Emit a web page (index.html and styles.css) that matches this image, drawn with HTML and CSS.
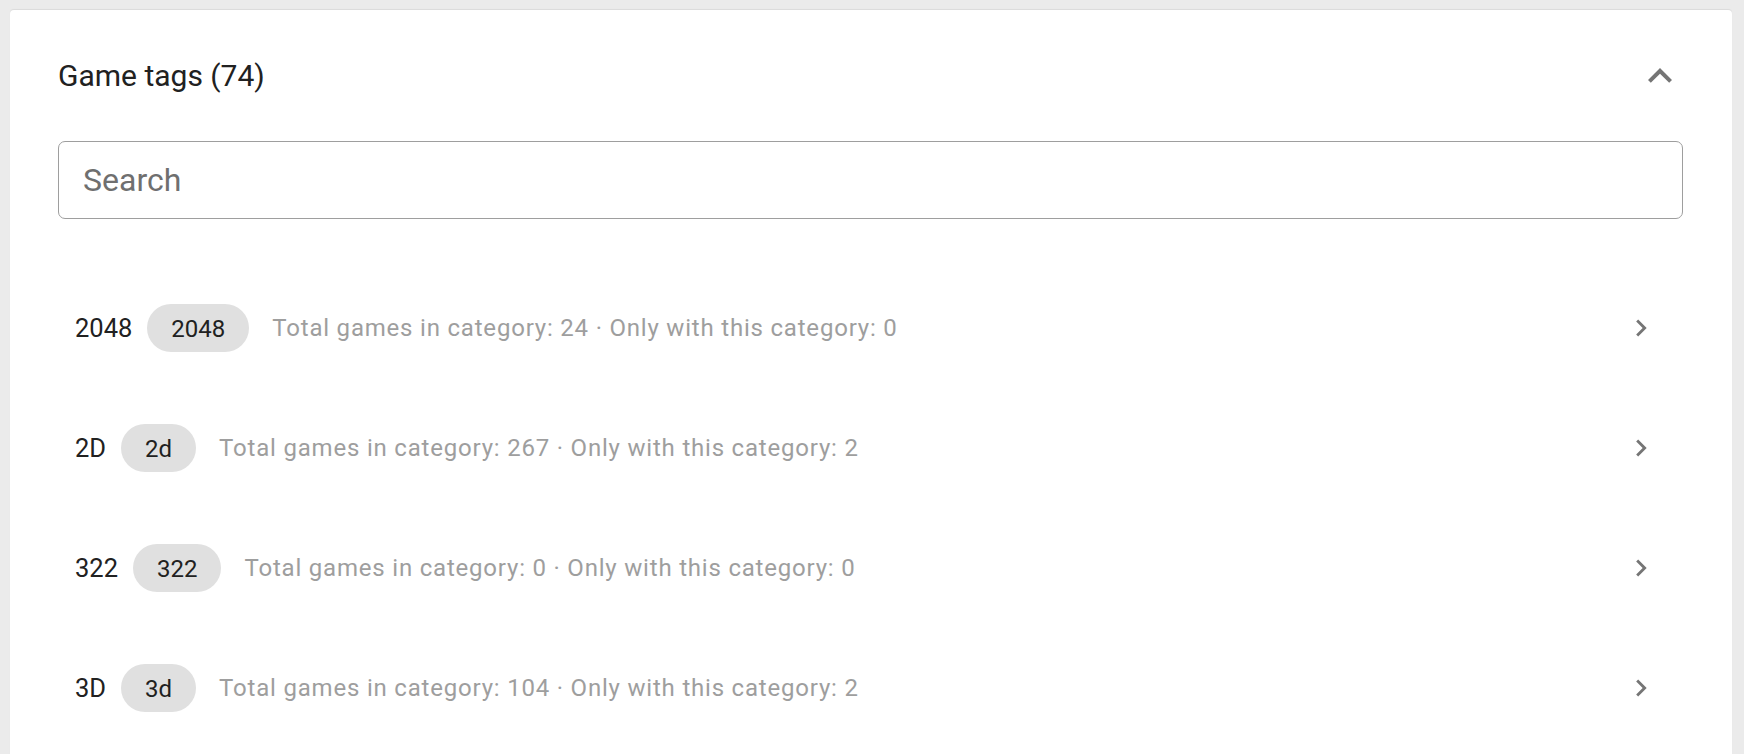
FILE: index.html
```html
<!DOCTYPE html>
<html lang="en">
<head>
<meta charset="utf-8">
<title>Game tags</title>
<link rel="stylesheet" href="styles.css">
</head>
<body>
<div class="page">
  <section class="card">
    <header class="card-header">
      <h2 class="title">Game tags (74)</h2>
      <button class="icon-btn" aria-label="Collapse">
        <svg viewBox="0 0 24 24" class="icon-lg"><path d="M12 8l-6 6 1.41 1.41L12 10.83l4.59 4.58L18 14z"/></svg>
      </button>
    </header>
    <div class="search">
      <input class="search-input" type="text" placeholder="Search">
    </div>
    <ul class="tag-list">
      <li class="tag-row">
        <span class="tag-name">2048</span>
        <span class="chip">2048</span>
        <span class="tag-meta">Total games in category: 24 · Only with this category: 0</span>
        <svg viewBox="0 0 24 24" class="icon-sm"><path d="M10 6 8.59 7.41 13.17 12l-4.58 4.59L10 18l6-6z"/></svg>
      </li>
      <li class="tag-row">
        <span class="tag-name">2D</span>
        <span class="chip">2d</span>
        <span class="tag-meta">Total games in category: 267 · Only with this category: 2</span>
        <svg viewBox="0 0 24 24" class="icon-sm"><path d="M10 6 8.59 7.41 13.17 12l-4.58 4.59L10 18l6-6z"/></svg>
      </li>
      <li class="tag-row">
        <span class="tag-name">322</span>
        <span class="chip">322</span>
        <span class="tag-meta">Total games in category: 0 · Only with this category: 0</span>
        <svg viewBox="0 0 24 24" class="icon-sm"><path d="M10 6 8.59 7.41 13.17 12l-4.58 4.59L10 18l6-6z"/></svg>
      </li>
      <li class="tag-row">
        <span class="tag-name">3D</span>
        <span class="chip">3d</span>
        <span class="tag-meta">Total games in category: 104 · Only with this category: 2</span>
        <svg viewBox="0 0 24 24" class="icon-sm"><path d="M10 6 8.59 7.41 13.17 12l-4.58 4.59L10 18l6-6z"/></svg>
      </li>
    </ul>
  </section>
</div>
</body>
</html>
```
FILE: styles.css
```css
* { box-sizing: border-box; }
html, body {
  margin: 0;
  padding: 0;
  height: 100%;
  overflow: hidden;
  background: #ebebeb;
  font-family: Roboto, "Noto Sans", "Liberation Sans", sans-serif;
}
.page {
  padding: 10px 12px 0 10px;
}
.card {
  background: #fff;
  border-radius: 4px;
  box-shadow: 0 -1px 1px rgba(0, 0, 0, 0.07);
  padding: 42px 49px 0 48px;
  min-height: 760px;
}
.card-header {
  display: flex;
  align-items: center;
  justify-content: space-between;
  height: 48px;
}
.title {
  margin: 0;
  font-size: 30px;
  font-weight: 400;
  color: #212121;
  line-height: 1;
}
.icon-btn {
  width: 48px;
  height: 48px;
  padding: 0;
  border: 0;
  background: transparent;
  display: flex;
  align-items: center;
  justify-content: center;
  margin-right: -1px;
}
.icon-lg {
  width: 48px;
  height: 48px;
  fill: #757575;
  display: block;
}
.search {
  margin-top: 41px;
}
.search-input {
  width: 100%;
  height: 78px;
  border: 1.5px solid #9e9e9e;
  border-radius: 7px;
  padding: 0 24px;
  font-family: inherit;
  font-size: 32px;
  color: #212121;
  outline: none;
  background: #fff;
}
.search-input::placeholder {
  color: #6f6f6f;
  opacity: 1;
}
.tag-list {
  list-style: none;
  margin: 49px 0 0;
  padding: 0;
}
.tag-row {
  display: flex;
  align-items: center;
  height: 120px;
  padding: 0 25px 0 17px;
}
.tag-name {
  font-size: 25.5px;
  color: #212121;
  margin-right: 15px;
}
.chip {
  display: inline-flex;
  align-items: center;
  height: 48px;
  padding: 2px 24px 0;
  border-radius: 24px;
  background: #e0e0e0;
  color: #212121;
  font-size: 24px;
  margin-right: 23px;
}
.tag-meta {
  flex: 1;
  font-size: 24px;
  color: #9e9e9e;
  letter-spacing: 0.0333em;
}
.icon-sm {
  width: 34px;
  height: 34px;
  fill: #757575;
  flex: none;
}
```
